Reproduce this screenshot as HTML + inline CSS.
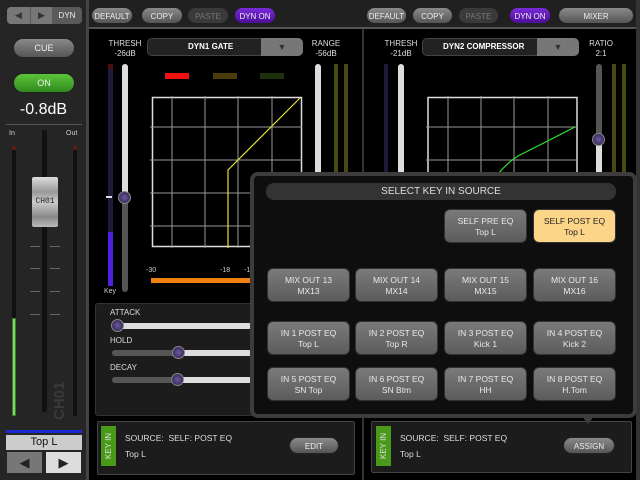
<!DOCTYPE html><html><head><style>
*{margin:0;padding:0;box-sizing:border-box}
body{width:640px;height:480px;background:#000;position:relative;overflow:hidden;font-family:"Liberation Sans",sans-serif;color:#ddd}
div{position:absolute}
.b{border-radius:9px;background:linear-gradient(#8a8a8a,#555);color:#eee;font-size:8px;text-align:center;line-height:17px;height:17px;border:1px solid #222}
.t{font-size:8px;color:#ddd;text-align:center;line-height:10px}
.pb{border-radius:6px;background:linear-gradient(#7a7a7a,#5c5c5c);color:#e8e8e8;font-size:8.5px;text-align:center;line-height:11px;padding-top:6px;height:34px;width:83px;border:1px solid #333}
</style></head><body>
<div style="left:0;top:0;width:87px;height:480px;background:#252525"></div>
<div style="left:86px;top:0;width:3px;height:480px;background:#444"></div>
<div style="left:7px;top:7px;width:75px;height:17px;border-radius:4px;background:#5a5a5a"></div>
<div style="left:7px;top:7px;width:23px;height:17px;border-radius:4px 0 0 4px;background:#777;color:#333;font-size:9px;text-align:center;line-height:17px">◀</div>
<div style="left:31px;top:7px;width:21px;height:17px;background:#777;color:#333;font-size:9px;text-align:center;line-height:17px">▶</div>
<div style="left:52px;top:7px;width:30px;height:17px;color:#eee;font-size:8px;text-align:center;line-height:17px">DYN</div>
<div class="b" style="left:13px;top:38px;width:62px;height:20px;line-height:19px;font-size:9px;border-radius:10px">CUE</div>
<div class="b" style="left:13px;top:73px;width:62px;height:20px;line-height:19px;font-size:9px;border-radius:10px;background:linear-gradient(#5bc53a,#2f8a1c)">ON</div>
<div style="left:0;top:101px;width:87px;text-align:center;font-size:16px;color:#fff">-0.8dB</div>
<div style="left:6px;top:124px;width:76px;height:1px;background:#555"></div>
<div style="left:9px;top:130px;font-size:7px;color:#ccc">In</div>
<div style="left:66px;top:130px;font-size:7px;color:#ccc">Out</div>
<div style="left:12px;top:146px;width:4px;height:270px;background:#111"></div>
<div style="left:12px;top:146px;width:4px;height:4px;background:#5a1a1a"></div>
<div style="left:12px;top:318px;width:4px;height:98px;background:#7fd860;border:1px solid #3a7a2a"></div>
<div style="left:73px;top:146px;width:4px;height:270px;background:#111"></div>
<div style="left:73px;top:146px;width:4px;height:4px;background:#5a1a1a"></div>
<div style="left:42px;top:130px;width:5px;height:282px;background:#111;border-radius:2px"></div>
<div style="left:30px;top:246px;width:10px;height:1px;background:#666;box-shadow:0 22px #666,0 45px #666,0 68px #666"></div>
<div style="left:50px;top:246px;width:10px;height:1px;background:#666;box-shadow:0 22px #666,0 45px #666,0 68px #666"></div>
<div style="left:32px;top:177px;width:26px;height:50px;background:linear-gradient(#ddd,#999 30%,#ccc 50%,#888 80%,#bbb);border-radius:2px"></div>
<div style="left:30px;top:197px;width:30px;height:10px;font-size:8px;color:#222;text-align:center;line-height:10px;font-family:'Liberation Mono',monospace">CH01</div>
<div style="left:50px;top:360px;width:20px;height:60px;color:#3a3a3a;font-size:15px;font-weight:bold;writing-mode:vertical-rl;transform:rotate(180deg);line-height:20px">CH01</div>
<div style="left:6px;top:430px;width:76px;height:3px;background:#1a2ad0"></div>
<div style="left:6px;top:435px;width:76px;height:15px;background:#ccc;color:#111;font-size:11px;text-align:center;line-height:15px">Top L</div>
<div style="left:7px;top:452px;width:35px;height:21px;background:#777;color:#222;font-size:13px;text-align:center;line-height:21px">◀</div>
<div style="left:46px;top:452px;width:35px;height:21px;background:#ddd;color:#222;font-size:13px;text-align:center;line-height:21px">▶</div>
<div style="left:89px;top:0;width:551px;height:29px;background:#202020;border-bottom:2px solid #555"></div>
<div class="b" style="left:91px;top:7px;width:42px">DEFAULT</div>
<div class="b" style="left:141px;top:7px;width:42px">COPY</div>
<div class="b" style="left:187px;top:7px;width:42px;background:#3a3a3a;color:#777">PASTE</div>
<div class="b" style="left:234px;top:7px;width:42px;background:linear-gradient(#7a2ad8,#4b0f9a)">DYN ON</div>
<div class="b" style="left:366px;top:7px;width:41px">DEFAULT</div>
<div class="b" style="left:412px;top:7px;width:41px">COPY</div>
<div class="b" style="left:458px;top:7px;width:41px;background:#3a3a3a;color:#777">PASTE</div>
<div class="b" style="left:509px;top:7px;width:42px;background:linear-gradient(#7a2ad8,#4b0f9a)">DYN ON</div>
<div class="b" style="left:558px;top:7px;width:76px">MIXER</div>
<div style="left:362px;top:29px;width:2px;height:451px;background:#333"></div>
<div style="left:636px;top:0;width:4px;height:480px;background:#333"></div>
<div class="t" style="left:104px;top:39px;width:42px">THRESH<br>-26dB</div>
<div style="left:147px;top:38px;width:156px;height:18px;border-radius:5px;background:#222;border:1px solid #444;color:#fff;font-size:8px;font-weight:bold;line-height:16px;padding-left:40px">DYN1 GATE</div>
<div style="left:261px;top:38px;width:42px;height:18px;border-radius:0 5px 5px 0;background:#777;color:#333;font-size:9px;text-align:center;line-height:18px">▼</div>
<div class="t" style="left:306px;top:39px;width:40px">RANGE<br>-56dB</div>
<div style="left:165px;top:73px;width:24px;height:6px;background:#f01010"></div>
<div style="left:213px;top:73px;width:24px;height:6px;background:#4a3c0c"></div>
<div style="left:260px;top:73px;width:24px;height:6px;background:#1e300c"></div>
<div style="left:108px;top:64px;width:5px;height:222px;background:#22183a"></div>
<div style="left:108px;top:64px;width:5px;height:5px;background:#4a1010"></div>
<div style="left:108px;top:232px;width:5px;height:54px;background:#5020e0"></div>
<div style="left:106px;top:196px;width:6px;height:2px;background:#ddd"></div>
<div style="left:104px;top:288px;font-size:7px;color:#ccc">Key</div>
<div style="left:122px;top:64px;width:6px;height:228px;border-radius:3px;background:#555"></div>
<div style="left:122px;top:64px;width:6px;height:134px;border-radius:3px;background:#ddd"></div>
<div style="left:118px;top:191px;width:13px;height:13px;border-radius:50%;background:radial-gradient(#6a5a9a,#2a1a4a);border:1px solid #888"></div>
<svg style="position:absolute;left:150px;top:96px" width="154" height="152">
<rect x="2.5" y="1.5" width="149" height="149" fill="none" stroke="#ddd" stroke-width="1.5"/>
<g stroke="#999" stroke-width="1"><line x1="22" y1="0" x2="22" y2="152"/><line x1="55" y1="0" x2="55" y2="152"/><line x1="88" y1="0" x2="88" y2="152"/><line x1="122" y1="0" x2="122" y2="152"/><line x1="0" y1="31" x2="152" y2="31"/><line x1="0" y1="64" x2="152" y2="64"/><line x1="0" y1="97" x2="152" y2="97"/><line x1="0" y1="130" x2="152" y2="130"/></g>
<polyline points="78,152 78,74 150,2" fill="none" stroke="#e8e040" stroke-width="1.2"/></svg>
<div style="left:146px;top:267px;font-size:7px;color:#ccc">-30</div>
<div style="left:220px;top:267px;font-size:7px;color:#ccc">-18</div>
<div style="left:244px;top:267px;font-size:7px;color:#ccc">-1</div>
<div style="left:151px;top:278px;width:100px;height:5px;background:#f08010"></div>
<div style="left:95px;top:303px;width:265px;height:113px;background:#1c1c1c;border:1px solid #333;border-radius:3px"></div>
<div style="left:110px;top:308px;font-size:8px;color:#ddd">ATTACK</div>
<div style="left:110px;top:336px;font-size:8px;color:#ddd">HOLD</div>
<div style="left:110px;top:363px;font-size:8px;color:#ddd">DECAY</div>
<div style="left:112px;top:323px;width:140px;height:6px;border-radius:3px;background:#ddd"></div>
<div style="left:112px;top:350px;width:140px;height:6px;border-radius:3px;background:linear-gradient(90deg,#555 45%,#ddd 45%)"></div>
<div style="left:112px;top:377px;width:140px;height:6px;border-radius:3px;background:linear-gradient(90deg,#555 45%,#ddd 45%)"></div>
<div style="left:111px;top:319px;width:13px;height:13px;border-radius:50%;background:radial-gradient(#6a5a9a,#2a1a4a);border:1px solid #888"></div>
<div style="left:172px;top:346px;width:13px;height:13px;border-radius:50%;background:radial-gradient(#6a5a9a,#2a1a4a);border:1px solid #888"></div>
<div style="left:171px;top:373px;width:13px;height:13px;border-radius:50%;background:radial-gradient(#6a5a9a,#2a1a4a);border:1px solid #888"></div>
<div class="t" style="left:380px;top:39px;width:42px">THRESH<br>-21dB</div>
<div style="left:422px;top:38px;width:157px;height:18px;border-radius:5px;background:#222;border:1px solid #444;color:#fff;font-size:8px;font-weight:bold;line-height:16px;padding-left:20px">DYN2 COMPRESSOR</div>
<div style="left:537px;top:38px;width:42px;height:18px;border-radius:0 5px 5px 0;background:#777;color:#333;font-size:9px;text-align:center;line-height:18px">▼</div>
<div class="t" style="left:586px;top:39px;width:30px">RATIO<br>2:1</div>
<div style="left:384px;top:64px;width:4px;height:120px;background:#22183a"></div>
<div style="left:398px;top:64px;width:6px;height:120px;border-radius:3px;background:#ddd"></div>
<div style="left:334px;top:64px;width:4px;height:120px;background:#4a4a10;box-shadow:10px 0 #4a4a10"></div>
<div style="left:315px;top:64px;width:6px;height:120px;border-radius:3px;background:#ddd"></div>
<div style="left:612px;top:64px;width:4px;height:120px;background:#4a4a10;box-shadow:10px 0 #4a4a10"></div>
<div style="left:596px;top:64px;width:6px;height:120px;border-radius:3px;background:#555"></div>
<div style="left:596px;top:140px;width:6px;height:44px;background:#ddd"></div>
<div style="left:592px;top:133px;width:13px;height:13px;border-radius:50%;background:radial-gradient(#6a5a9a,#2a1a4a);border:1px solid #888"></div>
<svg style="position:absolute;left:426px;top:96px" width="154" height="90">
<rect x="2" y="1.5" width="149" height="100" fill="none" stroke="#ddd" stroke-width="1.5"/>
<g stroke="#999"><line x1="22" y1="0" x2="22" y2="90"/><line x1="55" y1="0" x2="55" y2="90"/><line x1="88" y1="0" x2="88" y2="90"/><line x1="122" y1="0" x2="122" y2="90"/><line x1="0" y1="31" x2="152" y2="31"/><line x1="0" y1="64" x2="152" y2="64"/></g>
<path d="M72,78 Q82,66 92,60 Q110,51 149,31" fill="none" stroke="#30e030" stroke-width="1.2"/></svg>
<div style="left:97px;top:421px;width:258px;height:54px;background:#1c1c1c;border:1px solid #444;border-radius:2px"></div>
<div style="left:101px;top:426px;width:15px;height:40px;background:#4a9a1a;color:#ddd;font-size:8px;writing-mode:vertical-rl;transform:rotate(180deg);text-align:center;line-height:15px">KEY IN</div>
<div style="left:125px;top:433px;font-size:8.5px;color:#ddd">SOURCE:&nbsp; SELF: POST EQ</div>
<div style="left:125px;top:449px;font-size:8.5px;color:#ddd">Top L</div>
<div class="b" style="left:289px;top:437px;width:50px">EDIT</div>
<div style="left:371px;top:421px;width:261px;height:52px;background:#1c1c1c;border:1px solid #444;border-radius:2px"></div>
<div style="left:376px;top:426px;width:15px;height:40px;background:#4a9a1a;color:#ddd;font-size:8px;writing-mode:vertical-rl;transform:rotate(180deg);text-align:center;line-height:15px">KEY IN</div>
<div style="left:400px;top:433px;font-size:8.5px;color:#ddd">SOURCE:&nbsp; SELF: POST EQ</div>
<div style="left:400px;top:449px;font-size:8.5px;color:#ddd">Top L</div>
<div class="b" style="left:563px;top:437px;width:52px">ASSIGN</div>
<div style="left:250px;top:172px;width:387px;height:246px;background:#0e0e0e;border:4px solid #3c3c3c;border-radius:8px"></div>
<div style="left:580px;top:414px;width:0;height:0;border-left:8px solid transparent;border-right:8px solid transparent;border-top:10px solid #3c3c3c"></div>
<div style="left:266px;top:183px;width:350px;height:17px;border-radius:8px;background:#333;color:#ddd;font-size:10px;text-align:center;line-height:17px">SELECT KEY IN SOURCE</div>
<div class="pb" style="left:444px;top:209px">SELF PRE EQ<br>Top L</div>
<div class="pb" style="left:533px;top:209px;background:#fcd588;color:#222">SELF POST EQ<br>Top L</div>
<div class="pb" style="left:267px;top:268px">MIX OUT 13<br>MX13</div>
<div class="pb" style="left:355px;top:268px">MIX OUT 14<br>MX14</div>
<div class="pb" style="left:444px;top:268px">MIX OUT 15<br>MX15</div>
<div class="pb" style="left:533px;top:268px">MIX OUT 16<br>MX16</div>
<div class="pb" style="left:267px;top:321px">IN 1 POST EQ<br>Top L</div>
<div class="pb" style="left:355px;top:321px">IN 2 POST EQ<br>Top R</div>
<div class="pb" style="left:444px;top:321px">IN 3 POST EQ<br>Kick 1</div>
<div class="pb" style="left:533px;top:321px">IN 4 POST EQ<br>Kick 2</div>
<div class="pb" style="left:267px;top:367px">IN 5 POST EQ<br>SN Top</div>
<div class="pb" style="left:355px;top:367px">IN 6 POST EQ<br>SN Btm</div>
<div class="pb" style="left:444px;top:367px">IN 7 POST EQ<br>HH</div>
<div class="pb" style="left:533px;top:367px">IN 8 POST EQ<br>H.Tom</div>
</body></html>
